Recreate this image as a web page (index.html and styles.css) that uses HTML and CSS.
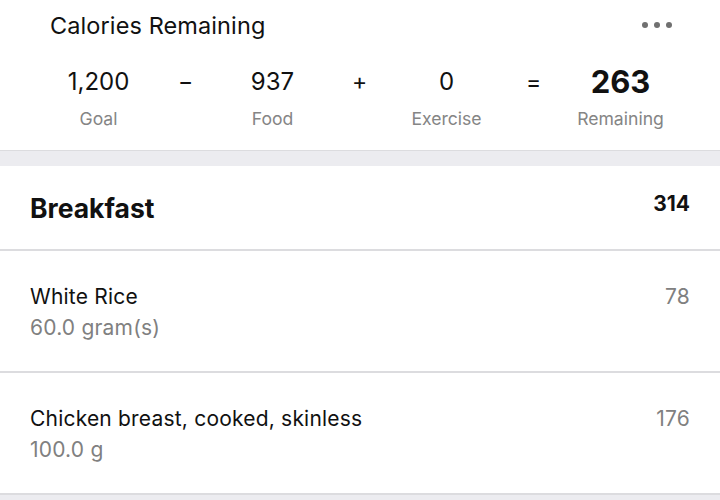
FILE: index.html
```html
<!DOCTYPE html>
<html lang="en">
<head>
    <meta charset="UTF-8">
    <meta name="viewport" content="width=device-width, initial-scale=1.0">
    <title>Diary</title>
    <link rel="stylesheet" href="styles.css">
</head>
<body>
    <div class="summary">
        <div class="summary-head">
            <h2>Calories Remaining</h2>
            <span class="more"><i></i><i></i><i></i></span>
        </div>
        <div class="equation">
            <div class="term"><span class="num">1,200</span><span class="label">Goal</span></div>
            <div class="op">&minus;</div>
            <div class="term"><span class="num">937</span><span class="label">Food</span></div>
            <div class="op">+</div>
            <div class="term"><span class="num">0</span><span class="label">Exercise</span></div>
            <div class="op">=</div>
            <div class="term"><span class="num total">263</span><span class="label">Remaining</span></div>
        </div>
    </div>

    <div class="meal">
        <div class="meal-head">
            <h3>Breakfast</h3>
            <span class="meal-total">314</span>
        </div>
        <div class="entry">
            <div>
                <div class="entry-name">White Rice</div>
                <div class="entry-size">60.0 gram(s)</div>
            </div>
            <span class="entry-cal">78</span>
        </div>
        <div class="entry">
            <div>
                <div class="entry-name">Chicken breast, cooked, skinless</div>
                <div class="entry-size">100.0 g</div>
            </div>
            <span class="entry-cal">176</span>
        </div>
    </div>
</body>
</html>
```

FILE: styles.css
```css
* {
    margin: 0;
    padding: 0;
    box-sizing: border-box;
}

body {
    font-family: Inter, "Noto Sans", sans-serif;
    background: #ececf0;
    color: #111;
}

.summary {
    background: #fff;
    border-bottom: 1px solid #dcdcdf;
    height: 151px;
}

.summary-head {
    display: flex;
    justify-content: space-between;
    align-items: center;
    padding: 10px 48px 0 50px;
    height: 40px;
}

.summary-head h2 {
    font-size: 23.5px;
    font-weight: 400;
    letter-spacing: 0.1px;
}

.more {
    display: flex;
    gap: 6px;
}

.more i {
    width: 6px;
    height: 6px;
    border-radius: 50%;
    background: #707070;
}

.equation {
    display: grid;
    grid-template-columns: repeat(7, 87px);
    padding: 22px 0 0 55px;
}

.term {
    display: flex;
    flex-direction: column;
    align-items: center;
}

.op {
    text-align: center;
    font-size: 23px;
    line-height: 40px;
}

.num {
    font-size: 24px;
    line-height: 40px;
}

.num.total {
    font-size: 31px;
    font-weight: 700;
}

.label {
    font-size: 17.6px;
    color: #858585;
    margin-top: 6px;
}

.meal {
    margin-top: 15px;
    background: #fff;
}

.meal-head {
    display: flex;
    justify-content: space-between;
    align-items: center;
    height: 85px;
    padding: 0 30px;
    border-bottom: 2px solid #dcdcdf;
}

.meal-head h3 {
    font-size: 26.5px;
    font-weight: 700;
}

.meal-total {
    font-size: 21px;
    font-weight: 700;
    margin-top: -8px;
}

.entry {
    display: flex;
    justify-content: space-between;
    align-items: flex-start;
    height: 122px;
    padding: 32px 30px 0;
    border-bottom: 2px solid #dcdcdf;
    letter-spacing: 0.2px;
}

.entry-name {
    font-size: 21px;
    line-height: 28px;
}

.entry-size {
    font-size: 21px;
    line-height: 34px;
    color: #808080;
}

.entry-cal {
    font-size: 21px;
    line-height: 28px;
    color: #808080;
}
```
